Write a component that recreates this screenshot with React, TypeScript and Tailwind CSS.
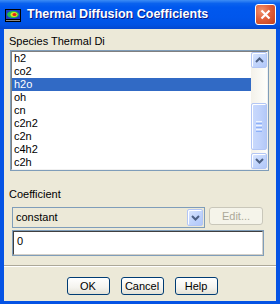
import React from "react";

const items = ["h2", "co2", "h2o", "oh", "cn", "c2n2", "c2n", "c4h2", "c2h"];
const selected = "h2o";

const font = "font-['Tahoma','Liberation_Sans',sans-serif]";

function Chevron({ up }: { up?: boolean }) {
  return (
    <svg width="9" height="6" viewBox="0 0 9 6">
      <polyline
        points={up ? "1,5 4.5,1.5 8,5" : "1,1 4.5,4.5 8,1"}
        fill="none"
        stroke="#4D6185"
        strokeWidth="2"
      />
    </svg>
  );
}

function ArrowButton({ up, className }: { up?: boolean; className?: string }) {
  return (
    <div
      className={`flex items-center justify-center rounded-[2px] border border-[#B3C6F5] bg-[linear-gradient(135deg,#DCE7FE_0%,#C2D5FC_50%,#B1C7F9_100%)] shadow-[inset_1px_1px_0_#fff] ${className ?? ""}`}
    >
      <Chevron up={up} />
    </div>
  );
}

function AppIcon() {
  return (
    <svg width="16" height="13" viewBox="0 0 16 13">
      <rect x="0" y="0" width="16" height="13" fill="#000" />
      <rect x="1" y="1" width="14" height="9" fill="#1E3CC8" />
      <ellipse cx="8" cy="5.5" rx="6" ry="3.5" fill="#22C04A" />
      <ellipse cx="9" cy="5.5" rx="3.5" ry="2.5" fill="#E8E020" />
      <ellipse cx="9.5" cy="5.5" rx="2" ry="1.5" fill="#E02020" />
      <rect x="1" y="11" width="14" height="1" fill="#8A8A8A" />
    </svg>
  );
}

function XpButton({ label }: { label: string }) {
  return (
    <button
      className={`h-[18px] w-[43px] rounded-[3px] border border-[#003C74] bg-[linear-gradient(180deg,#FFFFFF_0%,#F4F3EE_60%,#E3E1D6_100%)] text-[11px] leading-none text-black ${font}`}
    >
      {label}
    </button>
  );
}

export default function App() {
  return (
    <div className={`flex h-[304px] w-[280px] flex-col bg-[#0553E4] ${font}`}>
      {/* title bar */}
      <div className="flex h-[29px] shrink-0 items-center bg-[linear-gradient(180deg,#3D8DF5_0%,#0A62EE_12%,#0058EE_25%,#0056EC_60%,#0052E4_85%,#0447CF_100%)] pl-[5px] pr-[4px]">
        <div className="mt-[1px]">
          <AppIcon />
        </div>
        <span className="ml-[6px] font-['Liberation_Sans',sans-serif] text-[12.5px] font-bold text-white [text-shadow:1px_1px_0_#0A1883]">
          Thermal Diffusion Coefficients
        </span>
        <div className="ml-auto flex h-[21px] w-[21px] items-center justify-center rounded-[3px] border border-white bg-[radial-gradient(circle_at_30%_30%,#F0936E_0%,#E0603B_45%,#C1401C_100%)]">
          <svg width="11" height="11" viewBox="0 0 11 11">
            <path d="M1.5 1.5 L9.5 9.5 M9.5 1.5 L1.5 9.5" stroke="#fff" strokeWidth="2.2" />
          </svg>
        </div>
      </div>

      {/* body */}
      <div className="mx-[4px] mb-[3px] flex flex-1 flex-col bg-[#ECE9D8] text-[11px] leading-[13px] text-black">
        <div className="ml-[5px] mt-[6px] h-[13px]">Species Thermal Di</div>

        {/* list box */}
        <div className="ml-[6px] mr-[7px] mt-[2px] border border-[#7F9DB9]">
          <div className="flex border border-t-[#808080] border-l-[#808080] border-b-[#F0F0F0] border-r-[#F0F0F0] bg-white">
            <div className="flex-1">
              {items.map((it) => (
                <div
                  key={it}
                  className={`h-[13px] pl-[2px] ${it === selected ? "bg-[#316AC5] text-white" : ""}`}
                >
                  {it}
                </div>
              ))}
            </div>
            <div className="flex w-[16px] flex-col bg-[linear-gradient(90deg,#F3F1EA_0%,#FEFEFB_100%)]">
              <ArrowButton up className="h-[16px] w-[16px]" />
              <div className="flex flex-1 flex-col">
                <div className="h-[35px]" />
                <div className="flex h-[47px] flex-col items-center justify-center gap-[1px] rounded-[2px] border border-[#B3C6F5] bg-[linear-gradient(90deg,#CADAFC_0%,#C1D3FC_50%,#B4C9F8_100%)] shadow-[inset_1px_1px_0_#fff]">
                  <div className="h-[1px] w-[6px] bg-[#EEF4FE]" />
                  <div className="h-[1px] w-[6px] bg-[#8CB0F8]" />
                  <div className="h-[1px] w-[6px] bg-[#EEF4FE]" />
                  <div className="h-[1px] w-[6px] bg-[#8CB0F8]" />
                  <div className="h-[1px] w-[6px] bg-[#EEF4FE]" />
                  <div className="h-[1px] w-[6px] bg-[#8CB0F8]" />
                </div>
                <div className="flex-1" />
              </div>
              <ArrowButton className="h-[16px] w-[16px]" />
            </div>
          </div>
        </div>

        <div className="ml-[5px] mt-[17px] h-[13px]">Coefficient</div>

        <div className="ml-[8px] mr-[12px] mt-[6px] flex items-start">
          <div className="flex h-[21px] w-[193px] items-center border border-[#7F9DB9] bg-[#ECE9D8] p-[1px]">
            <span className="flex-1 pl-[2px]">constant</span>
            <ArrowButton className="h-[17px] w-[16px]" />
          </div>
          <button
            className={`ml-[4px] h-[18px] w-[54px] rounded-[3px] border border-[#C9C7BA] bg-[#F5F4EA] text-[11px] leading-none text-[#ACA899] ${font}`}
          >
            Edit...
          </button>
        </div>

        <div className="ml-[8px] mr-[12px] mt-[2px] h-[26px] border border-[#7F9DB9]">
          <div className="h-full border border-t-[#404040] border-l-[#404040] border-b-[#D4D0C8] border-r-[#D4D0C8] bg-white pl-[3px] pt-[3px]">
            0
          </div>
        </div>

        <div className="mt-[9px] h-[2px] border-t border-t-[#ACA899] border-b border-b-white" />

        <div className="mt-[10px] flex justify-center gap-[11px] pl-[4px]">
          <XpButton label="OK" />
          <XpButton label="Cancel" />
          <XpButton label="Help" />
        </div>
      </div>
    </div>
  );
}
